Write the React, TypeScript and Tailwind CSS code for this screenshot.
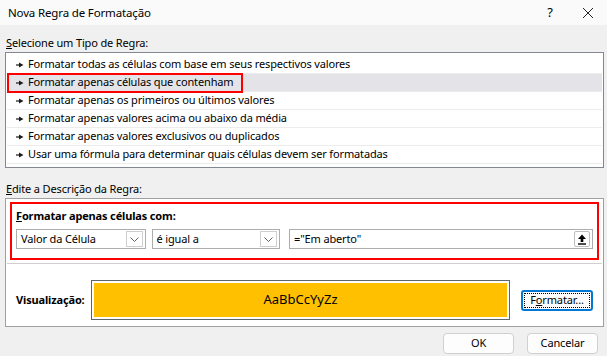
import React from 'react';

const rules = [
  'Formatar todas as células com base em seus respectivos valores',
  'Formatar apenas células que contenham',
  'Formatar apenas os primeiros ou últimos valores',
  'Formatar apenas valores acima ou abaixo da média',
  'Formatar apenas valores exclusivos ou duplicados',
  'Usar uma fórmula para determinar quais células devem ser formatadas',
];

const Bullet = () => (
  <svg width="8" height="6" viewBox="0 0 8 6" className="shrink-0">
    <rect x="0" y="2.4" width="4" height="1.2" fill="#1a1a1a" />
    <path d="M3 0.5 L7.5 3 L3 5.5 Z" fill="#1a1a1a" />
  </svg>
);

const Chevron = () => (
  <svg width="9" height="5" viewBox="0 0 9 5">
    <path d="M0.5 0.5 L4.5 4.5 L8.5 0.5" fill="none" stroke="#606060" strokeWidth="1" />
  </svg>
);

const Dropdown = ({ value, width }: { value: string; width: string }) => (
  <div className={`${width} h-[20px] bg-white border border-[#adadad] flex items-center justify-between pl-[4px] pr-[2px]`}>
    <span>{value}</span>
    <div className="w-[17px] h-[16px] border border-[#cfcfcf] flex items-center justify-center">
      <Chevron />
    </div>
  </div>
);

export default function App() {
  return (
    <div
      className="w-[607px] h-[356px] bg-[#f0f0f0] text-[11px] tracking-[-0.15px] text-[#000] overflow-hidden flex flex-col whitespace-nowrap"
      style={{ fontFamily: '"Noto Sans", "Open Sans", sans-serif' }}
    >
      {/* title bar */}
      <div className="h-[25px] bg-[#fafafa] flex items-center pl-[8px] shrink-0">
        <span className="flex-1 text-[11.5px]">Nova Regra de Formatação</span>
        <span className="w-[20px] text-center mr-[22px] text-[13px]">?</span>
        <svg width="12" height="12" viewBox="0 0 12 12" className="mr-[13px]">
          <path d="M1 1 L11 11 M11 1 L1 11" stroke="#222" strokeWidth="1" />
        </svg>
      </div>

      <div className="h-[27px] flex items-end pb-[1px] pl-[6px] leading-[16px]">
        <span><span className="underline">S</span>elecione um Tipo de Regra:</span>
      </div>

      {/* rule list */}
      <div className="relative ml-[5px] w-[599px] h-[116px] border border-[#828790] bg-white pt-[3px] px-[1px]">
        {rules.map((r, i) => (
          <div
            key={i}
            className={`h-[18px] flex items-center gap-[4px] pl-[9px] border-b border-[#ececec] ${i === 1 ? 'bg-[#e4e4e8]' : ''}`}
          >
            <Bullet />
            <span>{r}</span>
          </div>
        ))}
        <div className="absolute left-[1px] top-[20px] w-[236px] h-[20px] border-2 border-[#ff0000]" />
      </div>

      <div className="h-[30px] flex items-end pb-[1px] pl-[6px] leading-[16px]">
        <span><span className="underline">E</span>dite a Descrição da Regra:</span>
      </div>

      {/* description */}
      <div className="ml-[5px] w-[599px] h-[129px] border border-[#a0a0a0] bg-white px-[4px] pt-[3px] flex flex-col">
        <div className="h-[58px] border-2 border-[#ff0000] pl-[4px] pr-[4px] flex flex-col">
          <div className="h-[24px] flex items-center font-bold">
            <span><span className="underline">F</span>ormatar apenas células com:</span>
          </div>
          <div className="flex items-center gap-[6px] mt-[1px]">
            <Dropdown value="Valor da Célula" width="w-[130px]" />
            <Dropdown value="é igual a" width="w-[129px]" />
            <div className="ml-[3px] w-[305px] h-[20px] bg-white border border-[#adadad] flex items-center justify-between pl-[4px] pr-[2px]">
              <span>="Em aberto"</span>
              <div className="w-[16px] h-[16px] border border-[#bdbdbd] rounded-[2px] flex items-center justify-center">
                <svg width="10" height="11" viewBox="0 0 10 11">
                  <path d="M5 0.5 L9 5 L6.3 5 L6.3 8 L3.7 8 L3.7 5 L1 5 Z" fill="#000" />
                  <rect x="1" y="9.3" width="8" height="1.4" fill="#000" />
                </svg>
              </div>
            </div>
          </div>
        </div>
        <div className="mt-[3px] h-px bg-[#cfcfcf] mx-[-3px]" />
        <div className="flex items-center mt-[16px] pl-[6px]">
          <span className="w-[75px] font-bold">Visualização:</span>
          <div className="w-[419px] h-[40px] border border-[#646464] bg-white p-[2px]">
            <div className="w-full h-full bg-[#ffc000] flex items-center justify-center text-[13px] tracking-normal">
              AaBbCcYyZz
            </div>
          </div>
          <div className="ml-[11px] w-[72px] h-[21px] border-2 border-[#0078d4] rounded-[3px] bg-[#fdfdfd] p-[1px]">
            <div className="w-full h-full border border-dotted border-black flex items-center justify-center">
              <span>F<span className="underline">o</span>rmatar...</span>
            </div>
          </div>
        </div>
      </div>

      {/* buttons */}
      <div className="flex justify-end gap-[13px] pr-[9px] mt-[6px]">
        <div className="w-[71px] h-[21px] bg-[#fdfdfd] border border-[#d0d0d0] rounded-[4px] flex items-center justify-center">OK</div>
        <div className="w-[71px] h-[21px] bg-[#fdfdfd] border border-[#d0d0d0] rounded-[4px] flex items-center justify-center">Cancelar</div>
      </div>
    </div>
  );
}
